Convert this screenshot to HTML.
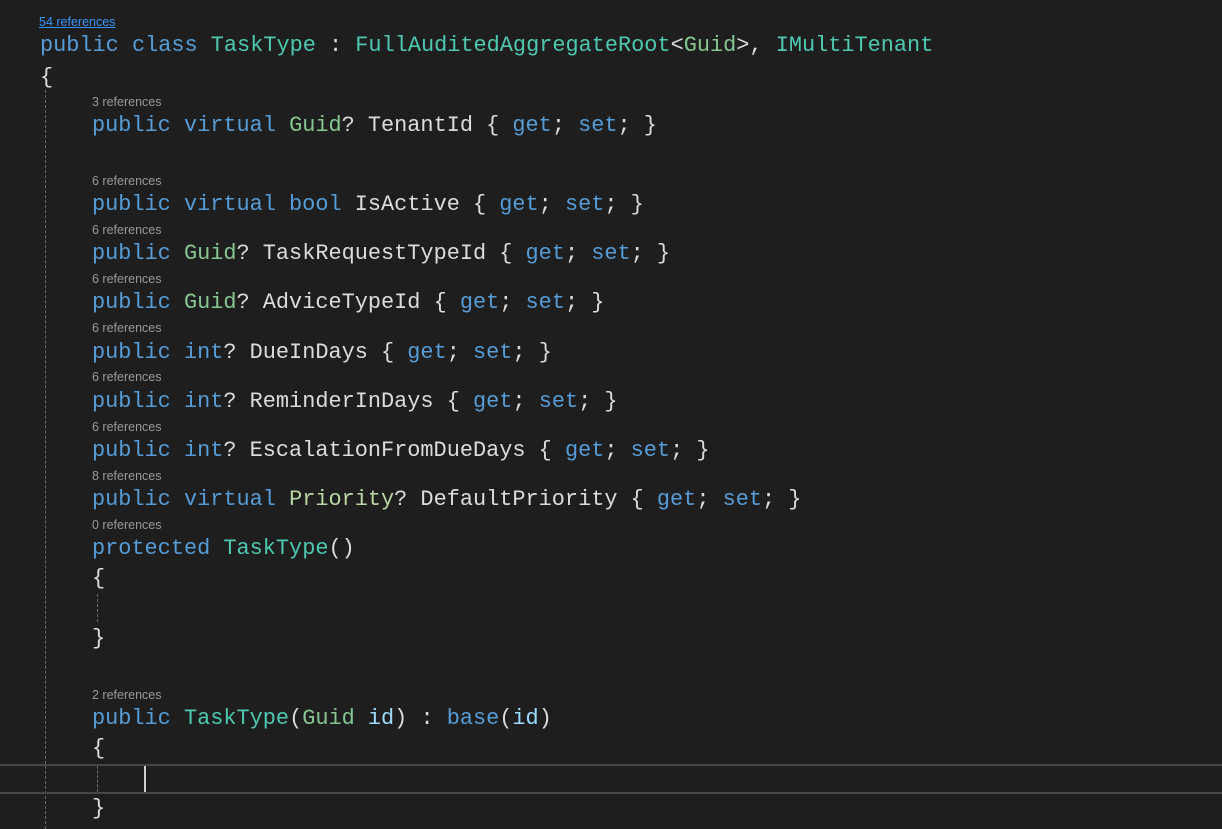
<!DOCTYPE html>
<html><head><meta charset="utf-8"><style>
html,body{margin:0;padding:0;background:#1e1e1e;width:1222px;height:829px;overflow:hidden;position:relative}
.c{position:absolute;font-family:"Liberation Mono",monospace;font-size:21.9px;line-height:30px;height:30px;color:#dcdcdc;white-space:pre;margin-top:1px}
.r{position:absolute;font-family:"Liberation Sans",sans-serif;font-size:12.5px;line-height:16px;color:#999;white-space:pre;margin-top:1px}
.k{color:#569cd6}.t{color:#4ec9b0}.g{color:#86c691}.e{color:#b8d7a3}.p{color:#9cdcfe}
.v{position:absolute;width:0;border-left:1px dashed #6a6a6a}
</style></head><body>
<div class="v" style="left:45px;top:90px;height:739px"></div>
<div class="v" style="left:97px;top:594px;height:28px"></div>
<div style="position:absolute;left:0;top:764px;width:1222px;height:26px;border-top:2px solid #464646;border-bottom:2px solid #464646"></div>
<div class="v" style="left:97px;top:766px;height:26px"></div>
<div style="position:absolute;left:144px;top:766px;width:2px;height:26px;background:#d0d0d0"></div>

<div class="r" style="left:39px;top:13px;color:#3794ff;text-decoration:underline">54 references</div>
<div class="c" style="left:40px;top:30px"><span class="k">public class</span> <span class="t">TaskType</span> : <span class="t">FullAuditedAggregateRoot</span>&lt;<span class="g">Guid</span>&gt;, <span class="t">IMultiTenant</span></div>
<div class="c" style="left:40px;top:62px">{</div>

<div class="r" style="left:92px;top:93px">3 references</div>
<div class="c" style="left:92px;top:110px"><span class="k">public virtual</span> <span class="g">Guid</span>? TenantId { <span class="k">get</span>; <span class="k">set</span>; }</div>
<div class="r" style="left:92px;top:172px">6 references</div>
<div class="c" style="left:92px;top:189px"><span class="k">public virtual bool</span> IsActive { <span class="k">get</span>; <span class="k">set</span>; }</div>
<div class="r" style="left:92px;top:221px">6 references</div>
<div class="c" style="left:92px;top:238px"><span class="k">public</span> <span class="g">Guid</span>? TaskRequestTypeId { <span class="k">get</span>; <span class="k">set</span>; }</div>
<div class="r" style="left:92px;top:270px">6 references</div>
<div class="c" style="left:92px;top:287px"><span class="k">public</span> <span class="g">Guid</span>? AdviceTypeId { <span class="k">get</span>; <span class="k">set</span>; }</div>
<div class="r" style="left:92px;top:319px">6 references</div>
<div class="c" style="left:92px;top:337px"><span class="k">public int</span>? DueInDays { <span class="k">get</span>; <span class="k">set</span>; }</div>
<div class="r" style="left:92px;top:368px">6 references</div>
<div class="c" style="left:92px;top:386px"><span class="k">public int</span>? ReminderInDays { <span class="k">get</span>; <span class="k">set</span>; }</div>
<div class="r" style="left:92px;top:418px">6 references</div>
<div class="c" style="left:92px;top:435px"><span class="k">public int</span>? EscalationFromDueDays { <span class="k">get</span>; <span class="k">set</span>; }</div>
<div class="r" style="left:92px;top:467px">8 references</div>
<div class="c" style="left:92px;top:484px"><span class="k">public virtual</span> <span class="e">Priority</span>? DefaultPriority { <span class="k">get</span>; <span class="k">set</span>; }</div>
<div class="r" style="left:92px;top:516px">0 references</div>
<div class="c" style="left:92px;top:533px"><span class="k">protected</span> <span class="t">TaskType</span>()</div>
<div class="c" style="left:92px;top:563px">{</div>
<div class="c" style="left:92px;top:623px">}</div>
<div class="r" style="left:92px;top:686px">2 references</div>
<div class="c" style="left:92px;top:703px"><span class="k">public</span> <span class="t">TaskType</span>(<span class="g">Guid</span> <span class="p">id</span>) : <span class="k">base</span>(<span class="p">id</span>)</div>
<div class="c" style="left:92px;top:733px">{</div>
<div class="c" style="left:92px;top:793px">}</div>
</body></html>
